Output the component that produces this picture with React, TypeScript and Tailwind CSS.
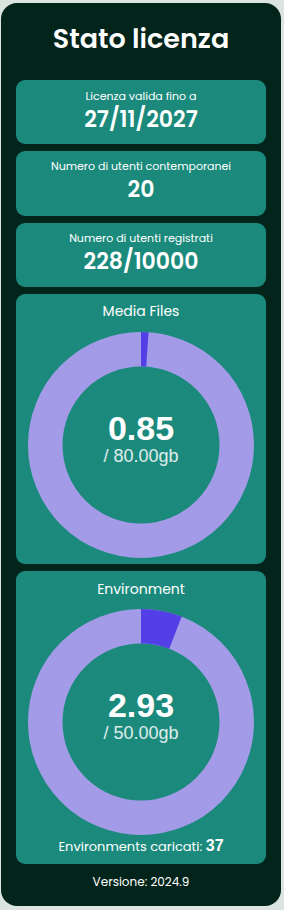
import React from "react";

const poppins = "font-['Poppins','Inter','Noto_Sans',sans-serif]";
const arial = "font-['Liberation_Sans',Arial,sans-serif]";

const stats = [
  { label: "Licenza valida fino a", value: "27/11/2027", pad: "pt-[8px] h-[64px]" },
  { label: "Numero di utenti contemporanei", value: "20", pad: "pt-[7px] h-[65px]" },
  { label: "Numero di utenti registrati", value: "228/10000", pad: "pt-[7px] h-[64px]" },
];

const Donut = ({ used, total }: { used: number; total: number }) => {
  const size = 226;
  const c = size / 2;
  const ro = 113;
  const ri = 78.5;
  const frac = used / total;
  const a = frac * Math.PI * 2;
  const pt = (r: number, ang: number) => [c + r * Math.sin(ang), c - r * Math.cos(ang)];
  const [ox, oy] = pt(ro, a);
  const [ix, iy] = pt(ri, a);
  const large = frac > 0.5 ? 1 : 0;
  const seg = `M ${c} ${c - ro} A ${ro} ${ro} 0 ${large} 1 ${ox} ${oy} L ${ix} ${iy} A ${ri} ${ri} 0 ${large} 0 ${c} ${c - ri} Z`;
  return (
    <div className="relative mx-auto w-[226px] h-[226px]">
      <svg width={size} height={size} viewBox={`0 0 ${size} ${size}`}>
        <circle cx={c} cy={c} r={(ro + ri) / 2} fill="none" stroke="#a39be8" strokeWidth={ro - ri} />
        <path d={seg} fill="#5240e6" />
      </svg>
      <div className={`absolute inset-0 flex flex-col items-center justify-center pb-[12px] ${arial}`}>
        <div className="text-[34px] leading-[32px] font-bold text-white">{used.toFixed(2)}</div>
        <div className="mt-[2px] text-[18px] leading-[20px] text-white/85">/ {total.toFixed(2)}gb</div>
      </div>
    </div>
  );
};

export default function App() {
  return (
    <div className={`h-[910px] w-[284px] bg-[#dbe4df] pt-[3px] pl-px ${poppins}`}>
      <div className="w-[280px] h-[903px] rounded-2xl bg-[#02241a] px-[15px] text-white">
        <h1 className="pt-[18px] text-center text-[27px] leading-[36px] font-semibold">Stato licenza</h1>
        <div className="mt-[23px] flex flex-col gap-[7px]">
          {stats.map((s) => (
            <div key={s.label} className={`rounded-[9px] bg-[#1b8a7c] text-center ${s.pad}`}>
              <div className="text-[11px] leading-[16px]">{s.label}</div>
              <div className="mt-[2px] text-[22px] leading-[28px] font-semibold">{s.value}</div>
            </div>
          ))}
          <div className="h-[270px] rounded-[9px] bg-[#1b8a7c] pt-[8px] text-center">
            <div className="text-[14px] leading-[18px]">Media Files</div>
            <div className="mt-[12px]">
              <Donut used={0.85} total={80} />
            </div>
          </div>
          <div className="h-[293px] rounded-[9px] bg-[#1b8a7c] pt-[9px] text-center">
            <div className="text-[14px] leading-[18px]">Environment</div>
            <div className="mt-[11px]">
              <Donut used={2.93} total={50} />
            </div>
            <div className="mt-[2px] text-[13px] leading-[18px]">
              Environments caricati: <span className={`${arial} text-[16px] font-bold`}>37</span>
            </div>
          </div>
        </div>
        <div className="mt-[10px] text-center text-[12px] leading-[16px]">Versione: 2024.9</div>
      </div>
    </div>
  );
}
